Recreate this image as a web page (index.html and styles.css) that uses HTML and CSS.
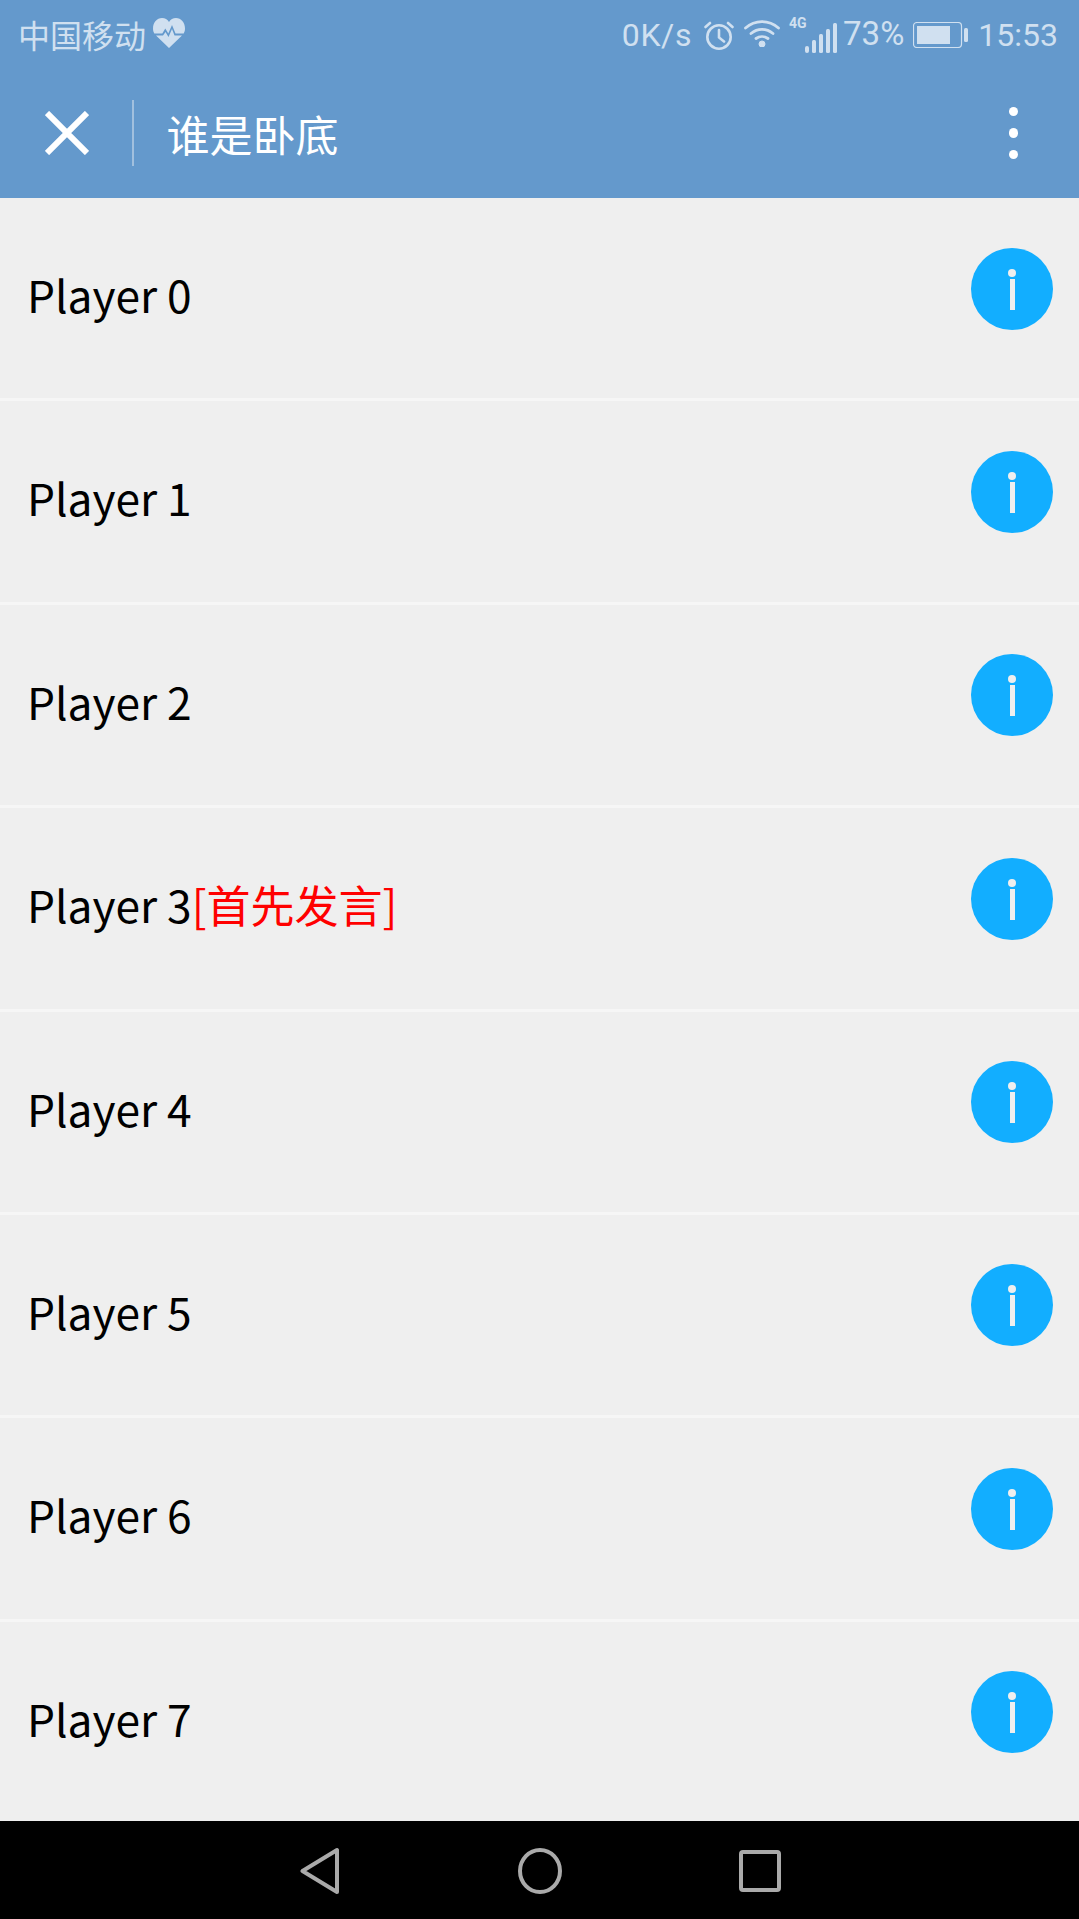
FILE: index.html
```html
<!DOCTYPE html>
<html lang="zh">
<head>
<meta charset="utf-8">
<title>谁是卧底</title>
<link rel="stylesheet" href="styles.css">
</head>
<body>
<div class="app">
  <header class="top">
    <div class="status">
      <div class="status-left">
        <span class="carrier">中国移动</span>
        <svg class="heart" viewBox="0 0 32 30"><path fill-rule="evenodd" d="M16 30 3 17.5H10l2.5-3.5 3 5 3.5-8 2.5 6.500H29L16 30ZM1.300 15.500C.5 14 0 12.500 0 10.500 0 4.500 4 0 9 0c3 0 5.500 1.500 7 4 1.500-2.500 4-4 7-4 5 0 9 4.500 9 10.500 0 2-.5 3.500-1.300 5H22.500L19 7l-3.700 8.500-3-5-3 5Z"/></svg>
      </div>
      <div class="status-right">
        <span class="speed">0K/s</span>
        <svg class="alarm" viewBox="0 0 30 31"><g fill="none" stroke-width="2.600" stroke-linecap="round"><circle cx="15" cy="17" r="11.700"/><path d="M15 10v7.500l5 4M1.500 7 6 3M28.500 7 24 3"/></g></svg>
        <svg class="wifi" viewBox="0 0 36 28"><g fill="none" stroke-width="2.800" stroke-linecap="round"><path d="M1.500 9C11 .5 25 .5 34.500 9M7 14.500c6.500-5.500 15.500-5.500 22 0M12 19.500c3.500-2.500 8.500-2.500 12 0"/></g><circle cx="18" cy="25" r="3"/></svg>
        <div class="signal">
          <span class="net">4G</span>
          <svg class="bars" viewBox="0 0 32 30"><rect x="0" y="23" width="4" height="7" rx="2"/><rect x="7" y="17" width="4" height="13" rx="1.500"/><rect x="14" y="11" width="4" height="19" rx="1.500"/><rect x="21" y="6" width="4" height="24" rx="1.500"/><rect x="28" y="0" width="4" height="30" rx="1.500"/></svg>
        </div>
        <span class="pct">73%</span>
        <svg class="battery" viewBox="0 0 56 26"><rect x=".5" y=".5" width="48" height="25" rx="3.500" fill="none" stroke-width="1.200"/><rect x="4" y="4" width="33" height="18"/><rect x="51" y="6" width="4" height="14" rx="1.500"/></svg>
        <span class="clock">15:53</span>
      </div>
    </div>
    <div class="toolbar">
      <svg class="close" viewBox="0 0 44 44"><path d="M2 2 42 42M42 2 2 42"/></svg>
      <span class="divider"></span>
      <h1 class="title">谁是卧底</h1>
      <div class="more"><i></i><i></i><i></i></div>
    </div>
  </header>
  <main class="list">
    <div class="row"><span class="name">Player 0</span><span class="info"><i class="dot"></i><i class="stem"></i></span></div>
    <div class="row"><span class="name">Player 1</span><span class="info"><i class="dot"></i><i class="stem"></i></span></div>
    <div class="row"><span class="name">Player 2</span><span class="info"><i class="dot"></i><i class="stem"></i></span></div>
    <div class="row"><span class="name">Player 3<em class="first">[首先发言]</em></span><span class="info"><i class="dot"></i><i class="stem"></i></span></div>
    <div class="row"><span class="name">Player 4</span><span class="info"><i class="dot"></i><i class="stem"></i></span></div>
    <div class="row"><span class="name">Player 5</span><span class="info"><i class="dot"></i><i class="stem"></i></span></div>
    <div class="row"><span class="name">Player 6</span><span class="info"><i class="dot"></i><i class="stem"></i></span></div>
    <div class="row"><span class="name">Player 7</span><span class="info"><i class="dot"></i><i class="stem"></i></span></div>
  </main>
  <nav class="navbar">
    <svg class="nav-back" viewBox="0 0 40 48"><path d="M2.500 24 37 3V45Z"/></svg>
    <svg class="nav-home" viewBox="0 0 44 46"><ellipse cx="22" cy="23" rx="20" ry="21"/></svg>
    <svg class="nav-recent" viewBox="0 0 42 42"><rect x="2" y="2" width="38" height="38" rx="2"/></svg>
  </nav>
</div>
</body>
</html>
```

FILE: styles.css
```css
* { box-sizing: border-box; }
html, body { margin: 0; padding: 0; }
body { font-family: "Noto Sans CJK SC", "Noto Sans", sans-serif; background: #efefef; }
.app { display: flex; flex-direction: column; width: 1079px; height: 1919px; overflow: hidden; }

.top { flex: none; height: 198px; background: #6499cc; display: flex; flex-direction: column; }
.status { flex: none; height: 70px; padding: 0 21px 0 18px; display: flex; justify-content: space-between; align-items: center; color: #d0e0f0; }
.status-left { display: flex; align-items: center; gap: 7px; margin-top: -3px; }
.carrier { font-size: 32px; font-weight: 400; line-height: 40px; }
.heart { width: 32px; height: 30px; fill: #d0e0f0; margin-top: -2px; }
.status-right { display: flex; align-items: center; font-family: Roboto, "Liberation Sans", sans-serif; font-weight: 400; }
.speed { font-size: 32px; line-height: 40px; letter-spacing: .6px; margin-right: 12px; }
.alarm { width: 30px; height: 31px; stroke: #d0e0f0; margin-right: 10px; }
.wifi { width: 36px; height: 28px; stroke: #d0e0f0; fill: #d0e0f0; margin-right: 9px; margin-top: -4px; }
.signal { position: relative; width: 48px; height: 40px; margin-right: 6px; }
.net { position: absolute; left: 0; top: -4px; font-size: 14px; font-weight: 700; line-height: 24px; }
.bars { position: absolute; right: 0; bottom: 2px; width: 32px; height: 30px; fill: #d0e0f0; }
.pct { font-size: 33px; line-height: 40px; margin-right: 9px; margin-top: -3px; }
.battery { width: 56px; height: 26px; fill: #d0e0f0; stroke: #d0e0f0; margin-right: 9px; }
.battery rect:not(:first-child) { stroke: none; }
.clock { font-size: 32px; line-height: 40px; }

.toolbar { flex: 1; display: flex; align-items: center; position: relative; padding-left: 45px; margin-top: -2px; }
.close { width: 44px; height: 44px; fill: none; stroke: #fff; stroke-width: 6px; flex: none; }
.divider { width: 1.500px; height: 66px; background: #a1c0de; margin-left: 43px; flex: none; }
.title { margin: 0 0 0 33px; font-size: 43px; font-weight: 400; line-height: 60px; color: #fff; }
.more { margin-left: auto; margin-right: 61px; display: flex; flex-direction: column; gap: 12px; }
.more i { display: block; width: 9.500px; height: 9.500px; border-radius: 50%; background: #fff; }

.list { flex: 1; min-height: 0; overflow: hidden; }
.row { height: 203.400px; border-bottom: 3px solid #f6f6f6; padding: 49.500px 26px 0 27px; display: flex; justify-content: space-between; align-items: flex-start; background: #efefef; }
.name { font-size: 44.300px; font-weight: 400; line-height: 66px; color: #000; margin-top: 13.500px; }
.first { font-style: normal; color: #f00; font-size: 44px; }
.info { flex: none; width: 82px; height: 82px; border-radius: 50%; background: #12aeff; display: flex; flex-direction: column; align-items: center; padding-top: 21px; }
.dot { width: 8px; height: 8px; border-radius: 50%; background: #efefef; }
.stem { width: 5px; height: 31px; background: #efefef; margin-top: 2px; }

.navbar { flex: none; height: 98px; background: #000; position: relative; }
.navbar svg { position: absolute; fill: none; stroke: #aaa; stroke-width: 4px; stroke-linejoin: round; }
.nav-back { left: 300px; top: 26px; width: 40px; height: 48px; }
.nav-home { left: 518px; top: 27px; width: 44px; height: 46px; }
.nav-recent { left: 739px; top: 29px; width: 42px; height: 42px; }
```
